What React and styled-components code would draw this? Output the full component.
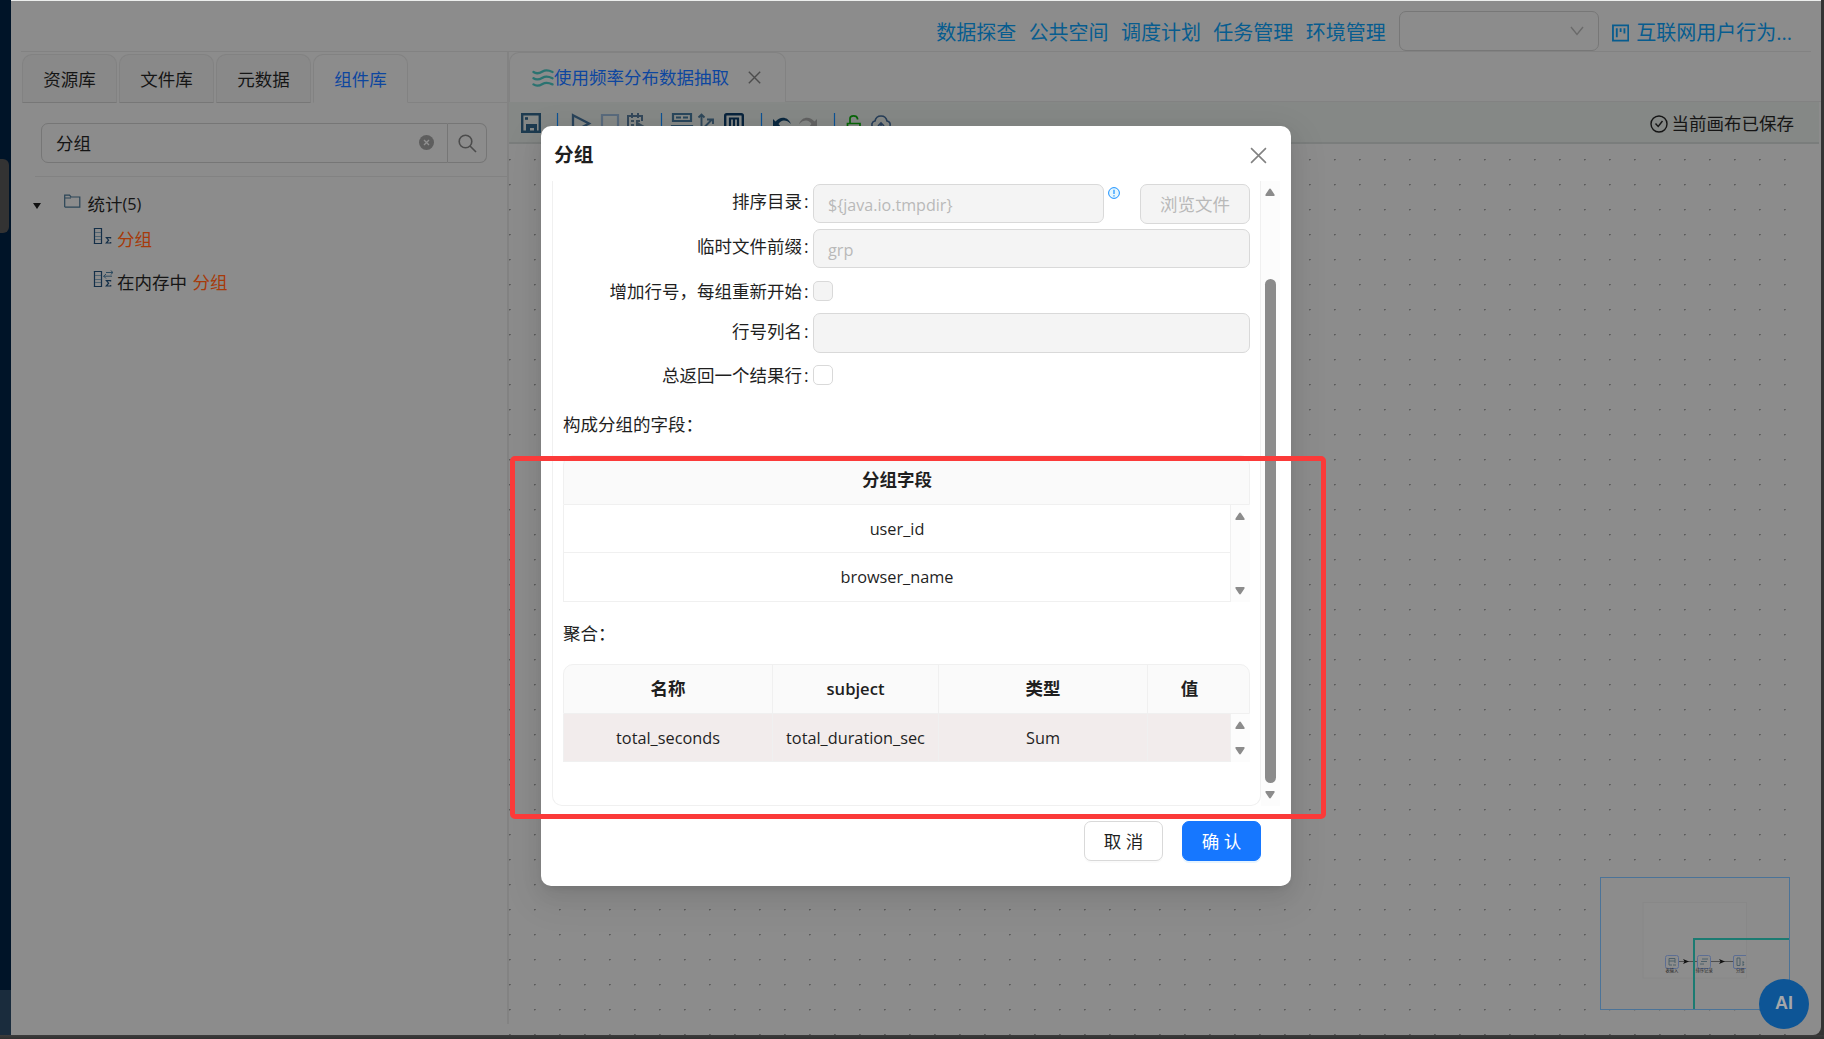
import React from 'react';
import styled, { createGlobalStyle, css } from 'styled-components';

const GlobalStyle = createGlobalStyle`
  *, *::before, *::after { box-sizing: border-box; }
  body {
    margin: 0;
    overflow: hidden;
    background: #343434;
    color: #151515;
    font: 17.5px/27.5px "Open Sans", "Noto Sans CJK SC", sans-serif;
  }
`;

/* ---------- shell ---------- */
const Shell = styled.div`
  display: flex;
  width: 1824px;
  height: 1039px;
  padding: 0 3px 4px 0;
  overflow: hidden;
  background: linear-gradient(#343434 1035px, #3c3c3c 1035px, #303030 1039px);
`;
const Rail = styled.aside`
  display: flex;
  flex-direction: column;
  width: 11px;
  flex: none;
  background: #001428;
`;
const RailHandle = styled.div`
  width: 9px;
  height: 74px;
  margin-top: 159px;
  border-radius: 0 6px 6px 0;
  background: #333;
`;
const RailFoot = styled.div`
  height: 45px;
  margin-top: auto;
  background: #1a2c3d;
`;
const Page = styled.div`
  display: flex;
  flex-direction: column;
  flex: 1;
  min-width: 0;
  border-top: 1px solid #eceeed;
  border-radius: 0 0 8px 0;
  background: #8c8c8c;
`;
const Header = styled.header`
  display: flex;
  align-items: center;
  justify-content: flex-end;
  height: 51px;
  flex: none;
  margin: 0 10px;
  padding-right: 19px;
  padding-top: 9px;
  border-bottom: 1px solid #828282;
  color: #075c8f;
  font-size: 20px;
`;
const HeaderLink = styled.a`
  width: 80px;
  margin-right: 12.35px;
  line-height: 40px;
  padding-top: 4px;
  white-space: nowrap;
`;
const Select = styled.div`
  display: flex;
  align-items: center;
  justify-content: flex-end;
  width: 200px;
  height: 40px;
  margin-left: 1px;
  padding-right: 14px;
  border: 1px solid #777;
  border-radius: 7px;
  color: #6a6a6a;
`;
const Project = styled.a`
  display: flex;
  align-items: center;
  gap: 7px;
  margin-left: 13px;
  padding-top: 4px;
  width: 180px;
  white-space: nowrap;
`;
const Workspace = styled.div`
  display: flex;
  flex: 1;
  min-height: 0;
`;
const Latin = styled.span`
  font-size: ${(p) => p.$size || 16.3}px;
`;

/* ---------- component library ---------- */
const Library = styled.section`
  display: flex;
  flex-direction: column;
  width: 498px;
  height: 972px;
  flex: none;
  border-right: 2px solid #838383;
`;
const LibraryTabs = styled.div`
  display: flex;
  gap: 2px;
  height: 51px;
  padding: 2px 0 0 11px;
`;
const LibraryTab = styled.div`
  width: 95px;
  flex: none;
  border: 1px solid #828282;
  border-bottom-color: ${(p) => (p.$active ? '#8c8c8c' : '#777')};
  border-radius: 10px 10px 0 0;
  background: ${(p) => (p.$active ? '#8c8c8c' : '#898989')};
  color: ${(p) => (p.$active ? '#0d469f' : '#151515')};
  text-align: center;
  line-height: 49px;
`;
const TabsFill = styled.div`
  flex: 1;
  margin-left: -2px;
  border-bottom: 1px solid #828282;
`;
const SearchRow = styled.div`
  display: flex;
  height: 74px;
  margin-left: 24px;
  padding: 20px 20px 0 6px;
  border-bottom: 1px solid #828282;
`;
const SearchField = styled.div`
  display: flex;
  align-items: center;
  justify-content: space-between;
  flex: 1;
  height: 40px;
  padding: 1px 13px 0 14px;
  border: 1px solid #767676;
  border-radius: 7px 0 0 7px;
  svg { margin-top: -2px; }
`;
const SearchButton = styled.div`
  display: grid;
  place-items: center;
  width: 39px;
  height: 40px;
  border: 1px solid #767676;
  border-left: 0;
  border-radius: 0 7px 7px 0;
  color: #4c4c4c;
`;
const Tree = styled.div`
  display: flex;
  flex-direction: column;
  padding: 9px 0 0 22px;
`;
const TreeNode = styled.div`
  display: flex;
  align-items: center;
  height: 38px;
  white-space: pre;
`;
const Caret = styled.span`
  width: 0;
  margin: 1px 23px 0 0;
  border: 4.5px solid transparent;
  border-top: 6px solid #111;
  border-bottom: 0;
`;
const NodeIcon = styled.span`
  display: flex;
  width: ${(p) => p.$width || 24}px;
  height: 20px;
  margin-bottom: ${(p) => p.$lift || 0}px;
`;
const TreeLeaf = styled(TreeNode)`
  height: ${(p) => p.$height}px;
  padding-left: 60px;
  word-spacing: 1px;
`;
const Hit = styled.span`
  color: #a63a0a;
`;

/* ---------- canvas ---------- */
const Editor = styled.section`
  display: flex;
  flex-direction: column;
  flex: 1;
  min-width: 0;
`;
const FileTabs = styled.div`
  display: flex;
  height: 50px;
  flex: none;
`;
const FileTab = styled.div`
  display: flex;
  align-items: center;
  width: 277px;
  padding: 0 24px 0 22px;
  border: 1px solid #828282;
  border-bottom: 0;
  border-radius: 10px 10px 0 0;
  color: #0d469f;
  white-space: nowrap;
`;
const FileTabClose = styled.span`
  display: flex;
  margin-left: auto;
  color: #4d4d4d;
`;
const FileFill = styled.div`
  flex: 1;
  border-bottom: 1px solid #828282;
`;
const Toolbar = styled.div`
  display: flex;
  align-items: center;
  justify-content: space-between;
  height: 42px;
  flex: none;
  margin-right: 2px;
  padding: 1px 25px 0 12px;
  border-bottom: 2px solid #7a7d7c;
  background: #858886;
`;
const Tools = styled.div`
  display: flex;
  height: 22px;
  svg { flex: none; display: block; }
`;
const Saved = styled.div`
  display: flex;
  align-items: center;
  gap: 4px;
  padding-top: 2px;
`;
const Canvas = styled.div`
  display: flex;
  flex: 1;
  align-items: flex-end;
  justify-content: flex-end;
  width: 1291px;
  padding: 0 10px 25px 0;
  background: radial-gradient(circle at 0.9px 0.8px, #5a5a5a 0.6px, transparent 0.95px) 0 15px / 25px 25px;
`;
const MiniMap = styled.div`
  width: 190px;
  height: 133px;
  border: 1px solid #4b7398;
  background: #8c8c8c;
  svg { display: block; }
`;
const AiButton = styled.button`
  position: absolute;
  left: 1759px;
  top: 979px;
  width: 50px;
  height: 50px;
  padding: 0 0 1px;
  border: 0;
  border-radius: 50%;
  background: #0d5596;
  color: #a4a7aa;
  font: bold 18px "Liberation Sans", sans-serif;
`;

/* ---------- modal ---------- */
const Modal = styled.div`
  position: absolute;
  left: 541px;
  top: 126px;
  display: flex;
  flex-direction: column;
  width: 750px;
  height: 760px;
  border-radius: 10px;
  background: #fff;
  color: #1f1f1f;
  box-shadow: 0 8px 20px rgba(0,0,0,.08), 0 4px 8px -5px rgba(0,0,0,.12), 0 12px 35px 10px rgba(0,0,0,.05);
`;
const ModalHead = styled.div`
  display: flex;
  align-items: center;
  justify-content: space-between;
  height: 55px;
  padding: 3px 24px 0 13px;
  font-size: 19.7px;
  font-weight: 700;
  color: #1f1f1f;
  svg { color: #828282; }
`;
const ModalBody = styled.div`
  display: flex;
  height: 625px;
  margin: 0 11px;
`;
const Pane = styled.div`
  display: flex;
  flex-direction: column;
  width: 709px;
  padding: 0 10px;
  border: 1px solid #f0f0f0;
  border-top: 0;
  border-radius: 0 0 10px 10px;
`;
const FormRow = styled.div`
  display: flex;
  height: ${(p) => p.$height}px;
  padding-top: 3px;
`;
const Label = styled.label`
  width: 247px;
  margin-right: 3px;
  text-align: right;
  white-space: nowrap;
  line-height: ${(p) => p.$line || 34}px;
`;
const Colon = styled.span`
  margin: 0 1.5px 0 2px;
`;
const Input = styled.div`
  width: ${(p) => p.$width || 437}px;
  height: ${(p) => p.$height || 39}px;
  padding: 0 14px;
  border: 1px solid #d9d9d9;
  border-radius: 7px;
  background: #f4f4f4;
  color: #b9b9b9;
  line-height: 39px;
`;
const Info = styled.span`
  display: flex;
  margin: 3px 20px 0 4px;
`;
const Browse = styled.button`
  width: 110px;
  height: 40px;
  padding: 1px 0 0;
  border: 1px solid #d9d9d9;
  border-radius: 7px;
  background: #f4f4f4;
  color: #b9b9b9;
  font: inherit;
`;
const Check = styled.span`
  width: 20px;
  height: 20px;
  margin-top: ${(p) => p.$top}px;
  border: 1px solid #d9d9d9;
  border-radius: 5px;
  background: ${(p) => (p.$disabled ? '#f4f4f4' : '#fff')};
`;
const SectionLabel = styled.div`
  height: ${(p) => p.$height}px;
  line-height: ${(p) => p.$line}px;
`;
const Table = styled.div`
  width: 687px;
`;
const TableHead = styled.div`
  display: flex;
  height: 50px;
  border: 1px solid #f0f0f0;
  border-radius: 10px 10px 0 0;
  background: #fafafa;
  font-weight: 600;
  overflow: hidden;
`;
const TableScroll = styled.div`
  display: flex;
`;
const TableRows = styled.div`
  width: 668px;
  border: solid #f0f0f0;
  border-width: 0 1px;
`;
const TableRow = styled.div`
  display: flex;
  height: ${(p) => p.$height}px;
  border-bottom: 1px solid #f0f0f0;
  background: ${(p) => (p.$selected ? '#f2ecec' : '#fff')};
`;
const Cell = styled.div`
  width: ${(p) => p.$width}px;
  flex: none;
  line-height: 47px;
  text-align: center;
  ${(p) => p.$divider && css`border-right: 1px solid #f0f0f0;`}
`;
const ScrollTrack = styled.div`
  display: flex;
  flex-direction: column;
  align-items: center;
  justify-content: space-between;
  width: 19px;
  padding: 7px 0.5px 7px 0;
  background: #fcfcfc;
`;
const Thumb = styled.div`
  width: 11px;
  height: 504px;
  margin: 83px 0 auto;
  border-radius: 6px;
  background: #8b8b8b;
`;
const ModalFoot = styled.div`
  display: flex;
  justify-content: flex-end;
  gap: 19px;
  padding: 15px 30px 0 0;
`;
const Button = styled.button`
  width: 79px;
  height: 40px;
  padding: 1px 0 0;
  border: 1px solid ${(p) => (p.$primary ? '#1677ff' : '#d9d9d9')};
  border-radius: 7px;
  background: ${(p) => (p.$primary ? '#1677ff' : '#fff')};
  color: ${(p) => (p.$primary ? '#fff' : '#1f1f1f')};
  box-shadow: 0 2px 0 ${(p) => (p.$primary ? 'rgba(5,145,255,.1)' : 'rgba(0,0,0,.02)')};
  font: inherit;
`;
const Highlight = styled.div`
  position: absolute;
  left: 510px;
  top: 456px;
  width: 816px;
  height: 362.5px;
  border: 5px solid #fb3a39;
  border-radius: 5px;
`;

/* ---------- icons ---------- */
const Cross = ({ size, w = 1.5 }) => (
  <svg width={size} height={size} viewBox="0 0 16 16" fill="none" stroke="currentColor" strokeWidth={w}>
    <path d="M1 1L15 15M15 1L1 15" />
  </svg>
);
const Arrow = ({ down }) => (
  <svg width="10" height="8" viewBox="0 0 10 8" fill="#8b8b8b">
    <path d={down ? 'M.5 1Q0 0 1 0H9Q10 0 9.5 1.5L6 6.8Q5 8 4 6.8L.5 1.5Z' : 'M.5 7Q0 8 1 8H9Q10 8 9.5 6.5L6 1.2Q5 0 4 1.2L.5 6.5Z'} />
  </svg>
);
const FolderIcon = () => (
  <svg width="17" height="15" viewBox="0 0 17 15" fill="none" stroke="#2b4557" strokeWidth="1.2">
    <path d="M.7 13V1.2H5.5L7 3H15.8V13.2H.7M.7 4H7" />
  </svg>
);
const GroupIcon = ({ memory }) => (
  <svg width="21" height="18" viewBox="0 0 21 18" fill="none" stroke="#142f48" strokeWidth="1">
    <path d="M1.500 1V16.500M.8 1.500H8.500V16.500H.8" strokeWidth="1.200" />
    <path d="M2 5.500H8M2 9.500H8M2 12.500H8" stroke="#4f6472" />
    <path d="M17.600 11.400V10.600H13.400L15.600 13.200L13.300 16H17.700V15" strokeWidth="1.200" />
    {memory && <path d="M13 2.500H20M17.700.5L20 2.500L17.700 4.500M19 6.200H10.500M13 4L10.700 6.200L13 8.500" stroke="#2e4b60" />}
  </svg>
);
const WaveIcon = () => (
  <svg width="22" height="18" viewBox="0 0 22 18" fill="none" stroke="#2b7371" strokeWidth="2.3" strokeLinecap="round">
    <path d="M1.500 3C5 5.500 8 4 10.500 2.500S16 .8 20.500 3M1.500 9.200C5 11.700 8 10.200 10.500 8.700S16 7 20.500 9.200M1.500 15.400C5 17.900 8 16.400 10.500 14.900S16 13.200 20.500 15.400" />
  </svg>
);
const ToolIcons = () => (
  <svg width="382" height="22" viewBox="521 112 382 22" fill="none" stroke="#1d3b50" strokeWidth="2">
    <path d="M522.200 114.200H539.800V131.800H522.200Z" strokeWidth="2.400" />
    <path d="M526 132V124H537V132H534V128H530V132Z" fill="#1d3b50" stroke="none" />
    <path d="M525 118.500H528" strokeWidth="2.600" />
    <path d="M557.500 113V133M661.500 113V133M761.500 113V133M834.500 113V133" stroke="#0c5294" strokeWidth="1.200" />
    <path d="M573 115.200L589 123.500L573 132Z" stroke="#29435a" strokeWidth="2.300" />
    <path d="M602 115H618V132H602Z" stroke="#596a7c" strokeWidth="2.200" />
    <path d="M628 116H642V121M628 115V132H634M632 113V118M638 113V118" stroke="#33475a" />
    <path d="M631 121H634M636 121H640M631 125H634M631 129H634M636 125H638" stroke="#3a4c5a" />
    <path d="M636 121L646 127L636 133Z" fill="#3a4c5a" stroke="none" />
    <path d="M673 114H691V121H673ZM672 126H692V131H672ZM676 117.500H681M683 117.500H688" stroke="#29465b" strokeWidth="2.200" />
    <path d="M701.500 115V131H714M701.500 130L712 119.500M698.500 117.500L701.500 114.500L704.500 117.500M707 119.500H713V124" stroke="#2e475a" strokeWidth="1.900" />
    <rect x="725.200" y="114.200" width="17.600" height="17.600" rx="1.500" stroke="#08233c" strokeWidth="2.400" />
    <path d="M730 129V118.500H738V129M734 118.500V129" stroke="#08233c" strokeWidth="2.200" />
    <path d="M773 119V127H781L778.500 124C781 119.500 786 119 791 124C788 116 780 116 775.500 121.500Z" fill="#0c2940" stroke="none" />
    <path d="M817 119V127H809L811.500 124C809 119.500 804 119 799 124C802 116 810 116 814.500 121.500Z" fill="#626262" stroke="none" />
    <path d="M847.500 123.500H860V133H847.500ZM850 123V118.500Q850 115.800 853.500 115.800T857.500 118.500V119.500M853.700 126V129" stroke="#086508" strokeWidth="1.700" />
    <path d="M877 129Q871 128 872 123.500Q873 121 875 121Q876 116 881 116T887 121Q891 122 890 126Q889 129 886 129M881 131V123M878 126L881 123L884 126" stroke="#263d58" strokeWidth="1.600" />
  </svg>
);
const MapDrawing = () => (
  <svg width="188" height="131" viewBox="1601 878 188 131" fill="none">
    <rect x="1643" y="902.500" width="103.500" height="75.500" fill="#8d8d8d" stroke="#888" />
    <g stroke="#5c6e94">
      <rect x="1665.500" y="955.500" width="13" height="13" rx="2" />
      <rect x="1697.500" y="955.500" width="13" height="13" rx="2" />
      <path d="M1746 955.500H1735Q1733.500 955.500 1733.500 957V967Q1733.500 968.500 1735 968.500H1746" />
    </g>
    <path d="M1679 961.500H1697M1711 961.500H1733" stroke="#4e4e4e" />
    <path d="M1683 959L1689 961.500L1683 964L1684.500 961.500ZM1719 959L1725 961.500L1719 964L1720.500 961.500Z" fill="#111" />
    <g stroke="#465b66" strokeWidth=".9">
      <path d="M1669 958.500H1675V963M1669 958.500V965H1672M1669 961H1675M1673 965H1676" />
      <path d="M1702 959H1708M1701 961.500H1707M1700 964H1704" />
      <path d="M1737 958H1740V965.500H1737ZM1742 962H1744L1743 963.500L1744 965H1742" />
    </g>
    <g fill="#252525" fontSize="4.300" fontFamily="Noto Sans CJK SC, sans-serif">
      <text x="1665.500" y="972">表输入</text>
      <text x="1695.500" y="972">排序记录</text>
      <text x="1736" y="972">分组</text>
    </g>
    <path d="M1694 1009V939H1789" stroke="#1b7b72" strokeWidth="2" />
  </svg>
);

const links = ['数据探查', '公共空间', '调度计划', '任务管理', '环境管理'];
const libraryTabs = ['资源库', '文件库', '元数据', '组件库'];
const groupFields = ['user_id', 'browser_name'];
const columns = [
  { title: '名称', width: 209, value: 'total_seconds' },
  { title: <Latin $size={16.6}>subject</Latin>, width: 166, value: 'total_duration_sec' },
  { title: '类型', width: 209, value: 'Sum' },
  { title: '值', width: 83, value: '' },
];

const Field = ({ label, line }) => (
  <Label $line={line}>{label}<Colon>:</Colon></Label>
);

export default function App() {
  return (
    <>
      <GlobalStyle />
      <Shell>
        <Rail><RailHandle /><RailFoot /></Rail>
        <Page>
          <Header>
            {links.map((t) => <HeaderLink key={t}>{t}</HeaderLink>)}
            <Select>
              <svg width="14" height="10" viewBox="0 0 14 10" fill="none" stroke="currentColor" strokeWidth="1.4"><path d="M1 1L7 8.500L13 1" /></svg>
            </Select>
            <Project>
              <svg width="18" height="18" viewBox="0 0 18 18" fill="none" stroke="currentColor" strokeWidth="1.900"><path d="M1 1H17V17H1ZM5 4V13.500M9 4V8M13 4V9.500" /></svg>
              互联网用户行为...
            </Project>
          </Header>
          <Workspace>
            <Library>
              <LibraryTabs>
                {libraryTabs.map((t) => <LibraryTab key={t} $active={t === '组件库'}>{t}</LibraryTab>)}
                <TabsFill />
              </LibraryTabs>
              <SearchRow>
                <SearchField>
                  分组
                  <svg width="15" height="15" viewBox="0 0 15 15"><circle cx="7.500" cy="7.500" r="7.500" fill="#5e5e5e" /><path d="M5 5L10 10M10 5L5 10" stroke="#909090" strokeWidth="1.400" /></svg>
                </SearchField>
                <SearchButton>
                  <svg width="19" height="19" viewBox="0 0 19 19" fill="none" stroke="currentColor" strokeWidth="1.600"><circle cx="7.500" cy="7.500" r="6.300" /><path d="M12 12L18 18" /></svg>
                </SearchButton>
              </SearchRow>
              <Tree>
                <TreeNode><Caret /><NodeIcon $width={23.5} $lift={3}><FolderIcon /></NodeIcon>统计<Latin>(5)</Latin></TreeNode>
                <TreeLeaf $height={32}><NodeIcon $lift={6}><GroupIcon /></NodeIcon><Hit>分组</Hit></TreeLeaf>
                <TreeLeaf $height={54}><NodeIcon $lift={6}><GroupIcon memory /></NodeIcon>在内存中 <Hit>分组</Hit></TreeLeaf>
              </Tree>
            </Library>
            <Editor>
              <FileTabs>
                <FileTab><WaveIcon />使用频率分布数据抽取<FileTabClose><Cross size={13} w={1.7} /></FileTabClose></FileTab>
                <FileFill />
              </FileTabs>
              <Toolbar>
                <Tools><ToolIcons /></Tools>
                <Saved>
                  <svg width="18" height="18" viewBox="0 0 18 18" fill="none" stroke="#151515" strokeWidth="1.400"><circle cx="9" cy="9" r="8" /><path d="M5.500 8.500L8.200 11.500L12.500 6" /></svg>
                  当前画布已保存
                </Saved>
              </Toolbar>
              <Canvas><MiniMap><MapDrawing /></MiniMap></Canvas>
            </Editor>
          </Workspace>
        </Page>
      </Shell>
      <AiButton>AI</AiButton>
      <Modal>
        <ModalHead>分组<Cross size={17} /></ModalHead>
        <ModalBody>
          <Pane>
            <FormRow $height={45}>
              <Field label="排序目录" />
              <Input $width={291}><Latin $size={16.1}>{'${java.io.tmpdir}'}</Latin></Input>
              <Info>
                <svg width="12" height="12" viewBox="0 0 12 12"><circle cx="6" cy="6" r="5.400" fill="#e6f7ff" stroke="#1890ff" /><path d="M6 2.800V7M6 8.200V9.400" stroke="#1890ff" strokeWidth="1.200" /></svg>
              </Info>
              <Browse>浏览文件</Browse>
            </FormRow>
            <FormRow $height={45}><Field label="临时文件前缀" /><Input><Latin>grp</Latin></Input></FormRow>
            <FormRow $height={39}><Field label="增加行号，每组重新开始" /><Check $disabled $top={7} /></FormRow>
            <FormRow $height={45}><Field label="行号列名" line={36} /><Input $height={40} /></FormRow>
            <FormRow $height={47}><Field label="总返回一个结果行" /><Check $top={7} /></FormRow>
            <SectionLabel $height={53} $line={44}>构成分组的字段：</SectionLabel>
            <Table>
              <TableHead><Cell $width={666}>分组字段</Cell></TableHead>
              <TableScroll>
                <TableRows>
                  {groupFields.map((f, i) => <TableRow key={f} $height={48 + i}><Cell $width={666}><Latin>{f}</Latin></Cell></TableRow>)}
                </TableRows>
                <ScrollTrack><Arrow /><Arrow down /></ScrollTrack>
              </TableScroll>
            </Table>
            <SectionLabel $height={62} $line={62}>聚合：</SectionLabel>
            <Table>
              <TableHead>
                {columns.map((c, i) => <Cell key={i} $width={c.width} $divider={i < 3}>{c.title}</Cell>)}
              </TableHead>
              <TableScroll>
                <TableRows>
                  <TableRow $height={48} $selected>
                    {columns.map((c, i) => <Cell key={i} $width={c.width} $divider={i < 3}><Latin>{c.value}</Latin></Cell>)}
                  </TableRow>
                </TableRows>
                <ScrollTrack><Arrow /><Arrow down /></ScrollTrack>
              </TableScroll>
            </Table>
          </Pane>
          <ScrollTrack><Arrow /><Thumb /><Arrow down /></ScrollTrack>
        </ModalBody>
        <ModalFoot>
          <Button>取 消</Button>
          <Button $primary>确 认</Button>
        </ModalFoot>
      </Modal>
      <Highlight />
    </>
  );
}
